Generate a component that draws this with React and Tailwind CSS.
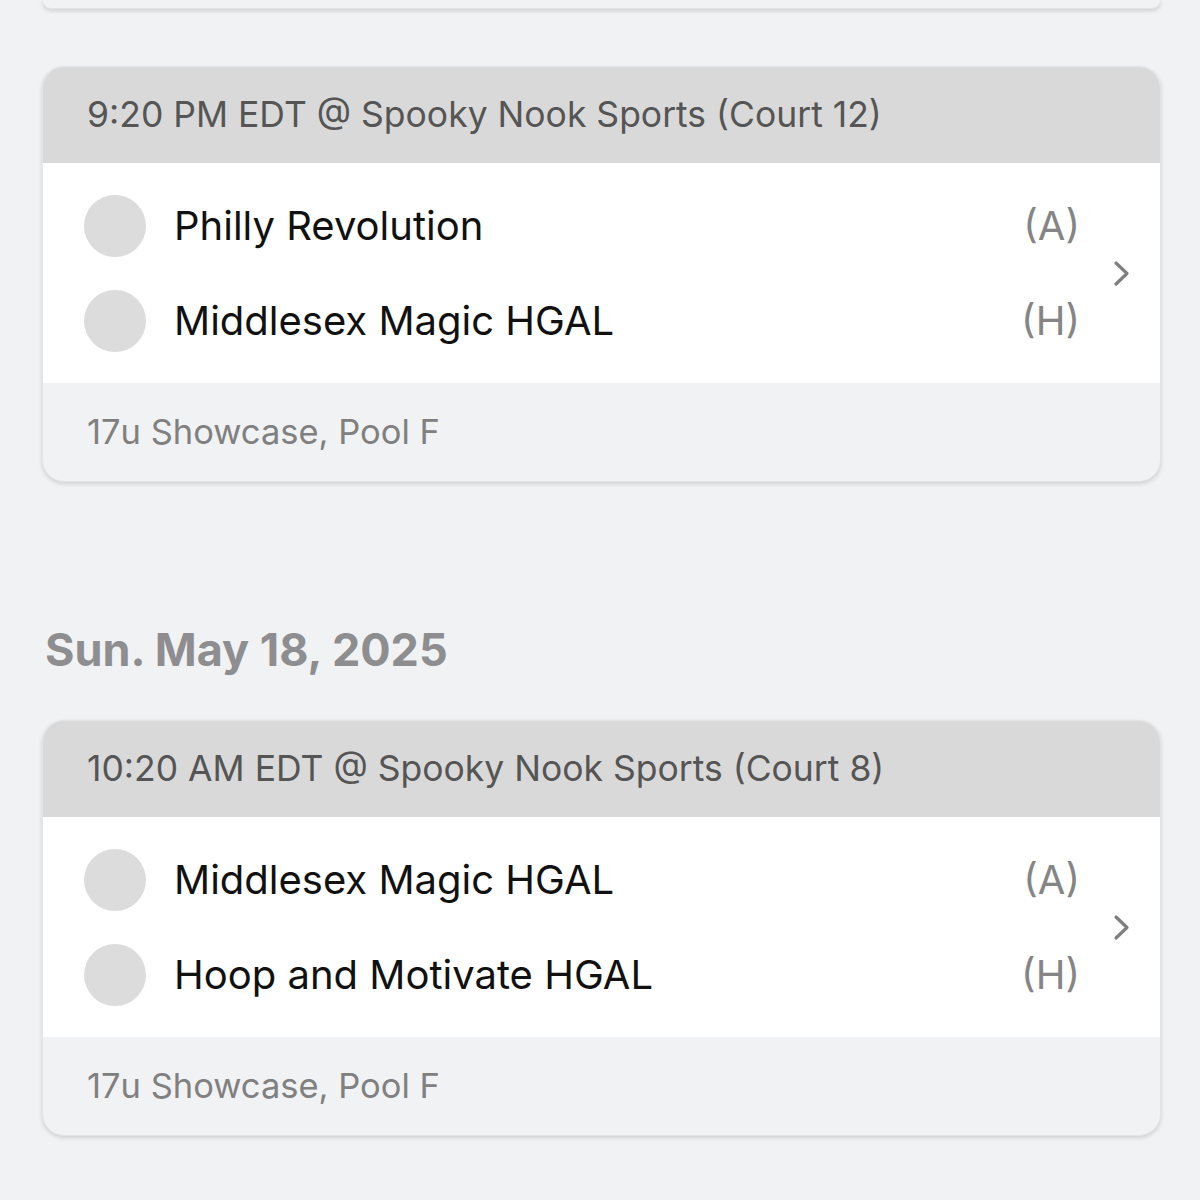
import React from 'react';

const games = [
  {
    time: '9:20 PM EDT @ Spooky Nook Sports (Court 12)',
    teams: [
      { name: 'Philly Revolution', side: '(A)' },
      { name: 'Middlesex Magic HGAL', side: '(H)' },
    ],
    pool: '17u Showcase, Pool F',
  },
];

const sunday = [
  {
    time: '10:20 AM EDT @ Spooky Nook Sports (Court 8)',
    teams: [
      { name: 'Middlesex Magic HGAL', side: '(A)' },
      { name: 'Hoop and Motivate HGAL', side: '(H)' },
    ],
    pool: '17u Showcase, Pool F',
  },
];

const Chevron = () => (
  <svg width="18" height="27" viewBox="0 0 18 27" fill="none">
    <polyline points="3,3 14,13.5 3,24" stroke="#7f7f7f" strokeWidth="3.2" strokeLinecap="round" strokeLinejoin="round" />
  </svg>
);

const GameCard = ({ game }) => (
  <div className="rounded-[22px] overflow-hidden bg-[#f1f2f4] shadow-[0_2px_4px_rgba(0,0,0,0.14)] border border-[#e3e4e6]">
    {/* header */}
    <div className="h-[96px] bg-[#d9d9d9] flex items-center pl-[44px] text-[35.5px] text-[#555555]">
      {game.time}
    </div>

    {/* teams */}
    <div className="bg-white h-[220px] flex items-center">
      <div className="flex-1 flex flex-col gap-[33px] pl-[41px]">
        {game.teams.map((t) => (
          <div key={t.name} className="flex items-center h-[62px]">
            <div className="w-[62px] h-[62px] rounded-full bg-[#dcdcdc] shrink-0"></div>
            <div className="ml-[28px] flex-1 text-[40px] text-[#111111]">{t.name}</div>
            <div className="text-[40px] text-[#858585]">{t.side}</div>
          </div>
        ))}
      </div>
      <div className="w-[80px] flex justify-center pl-[4px]">
        <Chevron />
      </div>
    </div>

    {/* footer */}
    <div className="h-[98px] flex items-center pl-[44px] text-[34.5px] text-[#808080]">
      {game.pool}
    </div>
  </div>
);

export default function App() {
  return (
    <div className="min-h-[1200px] bg-[#f1f2f4] pl-[42px] pr-[39px] overflow-hidden" style={{ fontFamily: 'Inter, "Noto Sans", sans-serif' }}>
      {/* bottom edge of the previous card */}
      <div className="h-[9px] rounded-b-[22px] bg-[#f1f2f4] shadow-[0_2px_4px_rgba(0,0,0,0.14)] border-b border-x border-[#e3e4e6]"></div>

      <div className="mt-[57px] flex flex-col">
        {games.map((g) => (
          <GameCard key={g.time} game={g} />
        ))}
      </div>

      <h2 className="mt-[140px] mb-[42px] pl-[3px] text-[45px] leading-[56px] font-bold text-[#8e8e90]">
        Sun. May 18, 2025
      </h2>

      <div className="flex flex-col">
        {sunday.map((g) => (
          <GameCard key={g.time} game={g} />
        ))}
      </div>
    </div>
  );
}
